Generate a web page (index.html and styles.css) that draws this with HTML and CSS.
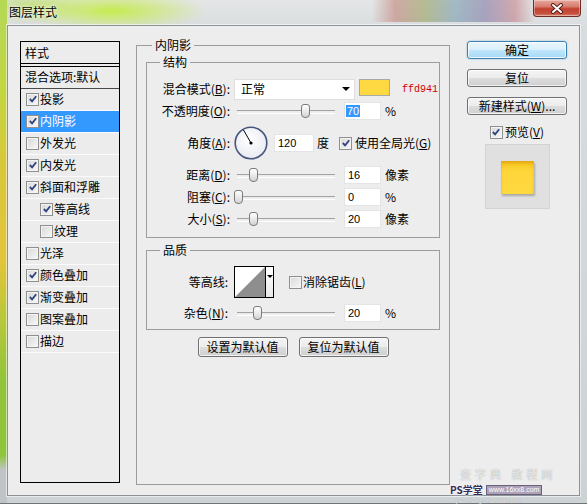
FILE: index.html
```html
<!DOCTYPE html>
<html lang="zh-CN">
<head>
<meta charset="utf-8">
<title>图层样式</title>
<link rel="stylesheet" href="styles.css">
</head>
<body>
<div class="window">
  <div class="titlebar">
    <span class="title">图层样式</span>
    <div class="close">
      <svg width="14" height="11" viewBox="0 0 14 11"><path d="M3 2 L11 9 M11 2 L3 9" stroke="#5a1d18" stroke-width="4" stroke-linecap="round"/><path d="M3 2 L11 9 M11 2 L3 9" stroke="#fff" stroke-width="2" stroke-linecap="round"/></svg>
    </div>
  </div>

  <div class="client">
    <div class="style-list">
      <div class="sl-head">样式</div>
      <div class="sl-blend">混合选项:默认</div>
      <div class="sl-row"><span class="cb"><svg viewBox="0 0 11 11"><path d="M2 5.5 L4.5 8 L9 2.5" /></svg></span>投影</div>
      <div class="sl-row active"><span class="cb"><svg viewBox="0 0 11 11"><path d="M2 5.5 L4.5 8 L9 2.5" /></svg></span>内阴影</div>
      <div class="sl-row"><span class="cb"></span>外发光</div>
      <div class="sl-row"><span class="cb"><svg viewBox="0 0 11 11"><path d="M2 5.5 L4.5 8 L9 2.5" /></svg></span>内发光</div>
      <div class="sl-row"><span class="cb"><svg viewBox="0 0 11 11"><path d="M2 5.5 L4.5 8 L9 2.5" /></svg></span>斜面和浮雕</div>
      <div class="sl-row indent"><span class="cb"><svg viewBox="0 0 11 11"><path d="M2 5.5 L4.5 8 L9 2.5" /></svg></span>等高线</div>
      <div class="sl-row indent"><span class="cb"></span>纹理</div>
      <div class="sl-row"><span class="cb"></span>光泽</div>
      <div class="sl-row"><span class="cb"><svg viewBox="0 0 11 11"><path d="M2 5.5 L4.5 8 L9 2.5" /></svg></span>颜色叠加</div>
      <div class="sl-row"><span class="cb"><svg viewBox="0 0 11 11"><path d="M2 5.5 L4.5 8 L9 2.5" /></svg></span>渐变叠加</div>
      <div class="sl-row"><span class="cb"></span>图案叠加</div>
      <div class="sl-row"><span class="cb"></span>描边</div>
    </div>

    <fieldset class="group main">
      <legend>内阴影</legend>

      <fieldset class="group sub structure">
        <legend>结构</legend>
        <div class="row">
          <span class="lbl">混合模式(<u>B</u>):</span>
          <div class="select"><span>正常</span><i class="caret"></i></div>
          <span class="swatch"></span>
          <span class="hex">ffd941</span>
        </div>
        <div class="row">
          <span class="lbl">不透明度(<u>O</u>):</span>
          <div class="slider"><span class="thumb" style="left:67px"></span></div>
          <span class="num"><span class="sel">70</span></span>
          <span class="unit">%</span>
        </div>
        <div class="row r-angle">
          <span class="lbl">角度(<u>A</u>):</span>
          <svg class="dial" width="34" height="34" viewBox="0 0 34 34">
            <defs>
              <radialGradient id="dg" cx="0.45" cy="0.4" r="0.6">
                <stop offset="0" stop-color="#ffffff"/>
                <stop offset="1" stop-color="#e9ebf2"/>
              </radialGradient>
            </defs>
            <circle cx="17" cy="17" r="15.8" fill="url(#dg)" stroke="#47557f" stroke-width="1.6"/>
            <line x1="17" y1="17" x2="9.5" y2="4" stroke="#000" stroke-width="1"/>
            <circle cx="17" cy="17" r="1.6" fill="#000"/>
          </svg>
          <span class="num wide">120</span>
          <span class="unit deg">度</span>
          <span class="cb global"><svg viewBox="0 0 11 11"><path d="M2 5.5 L4.5 8 L9 2.5" /></svg></span>
          <span class="cb-text">使用全局光(<u>G</u>)</span>
        </div>
        <div class="row r-gap">
          <span class="lbl">距离(<u>D</u>):</span>
          <div class="slider"><span class="thumb" style="left:15px"></span></div>
          <span class="num">16</span>
          <span class="unit">像素</span>
        </div>
        <div class="row">
          <span class="lbl">阻塞(<u>C</u>):</span>
          <div class="slider"><span class="thumb" style="left:0px"></span></div>
          <span class="num">0</span>
          <span class="unit">%</span>
        </div>
        <div class="row">
          <span class="lbl">大小(<u>S</u>):</span>
          <div class="slider"><span class="thumb" style="left:15px"></span></div>
          <span class="num">20</span>
          <span class="unit">像素</span>
        </div>
      </fieldset>

      <fieldset class="group sub quality">
        <legend>品质</legend>
        <div class="row r-contour">
          <span class="lbl q">等高线:</span>
          <div class="contour">
            <svg class="contour-pic" width="30" height="30" viewBox="0 0 30 30"><rect width="30" height="30" fill="#fff"/><polygon points="0,30 30,0 30,30" fill="#8e8e8e"/></svg>
            <span class="contour-drop"><i class="caret small"></i></span>
          </div>
          <span class="cb anti"></span>
          <span class="cb-text">消除锯齿(<u>L</u>)</span>
        </div>
        <div class="row r-gap">
          <span class="lbl q">杂色(<u>N</u>):</span>
          <div class="slider"><span class="thumb" style="left:19px"></span></div>
          <span class="num">20</span>
          <span class="unit">%</span>
        </div>
      </fieldset>

      <div class="defaults">
        <span class="btn">设置为默认值</span>
        <span class="btn">复位为默认值</span>
      </div>
    </fieldset>

    <div class="side">
      <span class="btn side-btn primary">确定</span>
      <span class="btn side-btn">复位</span>
      <span class="btn side-btn">新建样式(<u>W</u>)...</span>
      <div class="preview-row">
        <span class="cb"><svg viewBox="0 0 11 11"><path d="M2 5.5 L4.5 8 L9 2.5" /></svg></span>
        <span class="cb-text">预览(<u>V</u>)</span>
      </div>
      <div class="preview"><span class="preview-swatch"></span></div>
    </div>
  </div>

  <div class="watermark">
    <span class="wm-bg">查字典 教程网</span>
    <div class="wm-line"><span class="wm-ps">PS学堂</span><span class="wm-url">www.16xx8.com</span></div>
    <span class="wm-sub">jiaocheng.chazidian.com</span>
  </div>
</div>
</body>
</html>
```

FILE: styles.css
```css
* { box-sizing: border-box; }

html, body { margin: 0; padding: 0; }

body {
  width: 587px;
  height: 504px;
  overflow: hidden;
  font-family: "Noto Sans CJK SC", "Noto Sans", sans-serif;
  font-size: 12px;
  color: #000;
  background: #cfd4d6;
}

u { text-decoration: underline; text-underline-offset: 1px; }

.window {
  position: relative;
  width: 587px;
  height: 504px;
  display: flex;
  flex-direction: column;
  box-shadow: inset 0 -1px 0 #6f7477;
  background:
    radial-gradient(95px 20px at 112px 11px, rgba(196, 236, 72, 0.95), rgba(196, 236, 72, 0)),
    radial-gradient(60px 18px at 30px 6px, rgba(176, 218, 70, 0.6), rgba(176, 218, 70, 0)),
    linear-gradient(90deg, rgba(0,0,0,0) 372px, rgba(190,120,110,.55) 395px, rgba(150,160,90,.6) 425px, rgba(110,150,170,.55) 455px, rgba(120,110,160,.55) 485px, rgba(190,110,120,.5) 515px, rgba(0,0,0,0) 535px) 0 0 / 100% 22px no-repeat,
    linear-gradient(180deg, #b4d85a 0, #c2d640 90px, #d9c73a 170px, #e3c43a 260px, #b8c83a 320px, #92c43a 380px, #8fc43c 455px, #bfc4c6 470px, #bfc4c6 100%) 0 0 / 7px 100% no-repeat,
    linear-gradient(180deg, #e4e6e6 0, #d8dcde 30px, #cdd2d5 100%);
}

/* ---------- title bar ---------- */
.titlebar {
  height: 25px;
  flex: none;
  display: flex;
  align-items: flex-start;
  justify-content: space-between;
  padding: 0 6px 0 9px;
}

.title {
  margin-top: 4px;
  line-height: 16px;
  font-size: 12px;
  text-shadow: 0 0 5px rgba(255,255,255,.9), 0 0 2px rgba(255,255,255,.8);
}

.close {
  width: 48px;
  height: 17px;
  border: 1px solid #6e2a25;
  border-top: none;
  border-radius: 0 0 4px 4px;
  background: linear-gradient(180deg, #e4a89d 0, #d77e70 40%, #c2412f 55%, #c8503f 85%, #dc8a74 100%);
  box-shadow: inset 0 0 0 1px rgba(255,255,255,.35);
  display: flex;
  align-items: center;
  justify-content: center;
}

/* ---------- client area ---------- */
.client {
  width: 573px;
  height: 471px;
  margin-left: 7px;
  border: 1px solid #8d9296;
  background: #ededed;
  display: flex;
  align-items: flex-start;
  padding: 11px 0 0 12px;
  box-shadow: 0 0 0 1px rgba(255,255,255,.55);
}

/* ---------- left style list ---------- */
.style-list {
  width: 100px;
  height: 442px;
  margin-top: 4px;
  border: 1px solid #000;
  background: #ececec;
  flex: none;
}

.sl-head {
  height: 22px;
  line-height: 21px;
  padding-left: 4px;
  border-bottom: 1px solid #000;
}

.sl-blend {
  height: 23px;
  margin-top: 2px;
  line-height: 20px;
  padding-left: 4px;
  border-top: 1px solid #000;
  border-bottom: 1px solid #4a4a4a;
}

.sl-row {
  height: 22px;
  display: flex;
  align-items: center;
  padding-left: 5px;
  padding-bottom: 1px;
  border-bottom: 1px solid #fbfbfb;
  line-height: 16px;
}

.sl-row.indent { padding-left: 19px; }

.sl-row.active {
  background: #3399ff;
  color: #fff;
}

.sl-row .cb { margin-right: 1px; }

/* ---------- checkbox ---------- */
.cb {
  width: 13px;
  height: 13px;
  flex: none;
  border: 1px solid #8e8f8f;
  background: linear-gradient(135deg, #d8d8d8 0, #f8f8f8 100%);
  box-shadow: inset 0 0 0 1px #f4f4f4;
  display: inline-flex;
  align-items: center;
  justify-content: center;
}

.cb svg { width: 10px; height: 10px; }

.cb svg path {
  fill: none;
  stroke: #30427c;
  stroke-width: 2;
  stroke-linejoin: miter;
}

.cb-text { line-height: 16px; }

/* ---------- group boxes ---------- */
.group {
  margin: 0;
  padding: 0;
  min-width: 0;
  border: 1px solid #9c9c9c;
}

.group legend {
  padding: 0 3px;
  line-height: 16px;
}

.main {
  width: 314px;
  height: 448px;
  margin-left: 16px;
  flex: none;
}

.main > legend { margin-left: 15px; }

.sub {
  margin: 1px 9px 0;
}

.sub > legend { margin-left: 13px; }

.structure { padding: 8px 0 7px; }

.quality {
  margin-top: 4px;
  padding: 8px 0 5px;
}

/* ---------- rows ---------- */
.row {
  display: flex;
  align-items: center;
  height: 22px;
}

.r-angle { height: 34px; margin-top: 4px; }
.r-gap { margin-top: 4px; }
.r-contour { height: 32px; }

.lbl {
  width: 83px;
  flex: none;
  text-align: right;
  line-height: 16px;
}

.lbl.q { width: 81px; margin-right: 2px; }

.select {
  width: 121px;
  height: 21px;
  margin-left: 4px;
  background: #fff;
  border: 1px solid #dedede;
  display: flex;
  align-items: center;
  justify-content: space-between;
  padding: 0 4px 0 6px;
  line-height: 16px;
}

.caret {
  display: block;
  width: 0;
  height: 0;
  border-left: 4px solid transparent;
  border-right: 4px solid transparent;
  border-top: 4px solid #000;
}

.caret.small {
  border-left-width: 3px;
  border-right-width: 3px;
  border-top-width: 3px;
}

.swatch {
  width: 31px;
  height: 17px;
  margin-left: 4px;
  align-self: flex-start;
  margin-top: 1px;
  background: #ffd941;
  border: 1px solid #a8a8a8;
}

.hex {
  margin-left: 12px;
  color: #d20000;
  font-family: "Liberation Mono", "DejaVu Sans Mono", monospace;
  font-size: 10px;
}

/* slider */
.slider {
  position: relative;
  width: 104px;
  height: 16px;
  margin-left: 4px;
  flex: none;
}

.slider::before {
  content: "";
  position: absolute;
  left: 3px;
  right: 3px;
  top: 7px;
  height: 2px;
  border-top: 1px solid #a2a2a2;
  border-bottom: 1px solid #ffffff;
}

.thumb {
  position: absolute;
  top: 1px;
  width: 9px;
  height: 14px;
  border: 1px solid #7b7b7b;
  border-radius: 3px 3px 4px 4px;
  background: linear-gradient(180deg, #ffffff 0, #e6e6e6 60%, #d2d2d2 100%);
}

/* numeric fields */
.num {
  width: 37px;
  height: 18px;
  margin-left: 6px;
  flex: none;
  background: #fff;
  border: 1px solid #e4e4e4;
  padding-left: 3px;
  font-family: "Liberation Sans", "DejaVu Sans", sans-serif;
  font-size: 11px;
  line-height: 16px;
}

.num.wide { width: 40px; }

.num .sel {
  background: #3399ff;
  color: #fff;
  padding: 0 1px;
  margin-left: -2px;
}

.unit {
  margin-left: 4px;
  line-height: 16px;
}

.unit.deg { margin-left: 3px; }

.dial { margin-left: 4px; flex: none; }

.cb.global { margin-left: 10px; margin-right: 3px; }

/* contour */
.contour {
  margin-left: 4px;
  width: 40px;
  height: 32px;
  border: 1px solid #000;
  display: flex;
  flex: none;
}

.contour-pic { display: block; }

.contour-drop {
  flex: 1;
  border-left: 1px solid #000;
  background: linear-gradient(180deg, #ffffff, #e8e8e8);
  display: flex;
  justify-content: center;
  padding-top: 8px;
}

.cb.anti { margin-left: 15px; margin-right: 1px; }

/* buttons */
.btn {
  display: flex;
  align-items: center;
  justify-content: center;
  height: 20px;
  width: 90px;
  border: 1px solid #707070;
  border-radius: 3px;
  background: linear-gradient(180deg, #f4f4f4 0, #ececec 48%, #dddddd 52%, #cfcfcf 100%);
  box-shadow: inset 0 0 0 1px rgba(255,255,255,.7);
  line-height: 16px;
  white-space: nowrap;
}

.defaults {
  display: flex;
  justify-content: center;
  gap: 11px;
  margin-top: 7px;
}

/* right column */
.side {
  width: 100px;
  margin-left: 17px;
  margin-top: 4px;
  flex: none;
  display: flex;
  flex-direction: column;
  align-items: center;
}

.side-btn {
  width: 100px;
  height: 18px;
  margin-bottom: 10px;
}

.side-btn.primary {
  border-color: #3c7fb1;
  background: linear-gradient(180deg, #eaf6fd 0, #d9f0fc 48%, #bee6fd 52%, #a7d9f5 100%);
  box-shadow: inset 0 0 0 1px rgba(255,255,255,.8), 0 0 2px rgba(60,160,230,.6);
}

.preview-row {
  display: flex;
  align-items: center;
  height: 16px;
  margin-top: -1px;
}

.preview-row .cb { margin-right: 2px; }

.preview {
  width: 65px;
  height: 65px;
  margin-top: 4px;
  background: #e0e0e0;
  border: 1px solid #d3d3d3;
  display: flex;
  align-items: center;
  justify-content: center;
}

.preview-swatch {
  width: 33px;
  height: 33px;
  margin-top: 1px;
  background: linear-gradient(180deg, #f3c21c 0, #ffd63a 30%, #ffd941 100%);
  box-shadow: inset 0 2px 3px rgba(210,130,0,.45), 1px 2px 2px rgba(0,0,0,.25);
}

/* watermark overlay */
.watermark {
  position: absolute;
  left: 450px;
  top: 466px;
  width: 134px;
  height: 38px;
  display: flex;
  flex-direction: column;
  align-items: flex-start;
}

.wm-bg {
  margin-left: 10px;
  font-size: 11px;
  line-height: 16px;
  letter-spacing: 4px;
  color: rgba(255,255,255,.8);
  text-shadow: 0 0 1px rgba(110,110,110,.8);
}

.wm-line {
  display: flex;
  align-items: center;
  gap: 3px;
  height: 16px;
}

.wm-ps {
  font-size: 10px;
  line-height: 16px;
  font-weight: bold;
  color: #3b2a55;
  text-shadow: 0 0 2px #fff, 0 0 1px #fff;
}

.wm-url {
  font-family: "Liberation Sans", sans-serif;
  font-size: 7px;
  line-height: 8px;
  padding: 0 2px;
  color: #fff;
  background: rgba(120,100,140,.55);
  border: 1px solid rgba(80,70,100,.7);
}

.wm-sub {
  margin-left: 6px;
  font-family: "Liberation Sans", sans-serif;
  font-size: 6px;
  line-height: 6px;
  color: rgba(255,255,255,.85);
  text-shadow: 0 0 1px rgba(110,110,110,.8);
}
```
